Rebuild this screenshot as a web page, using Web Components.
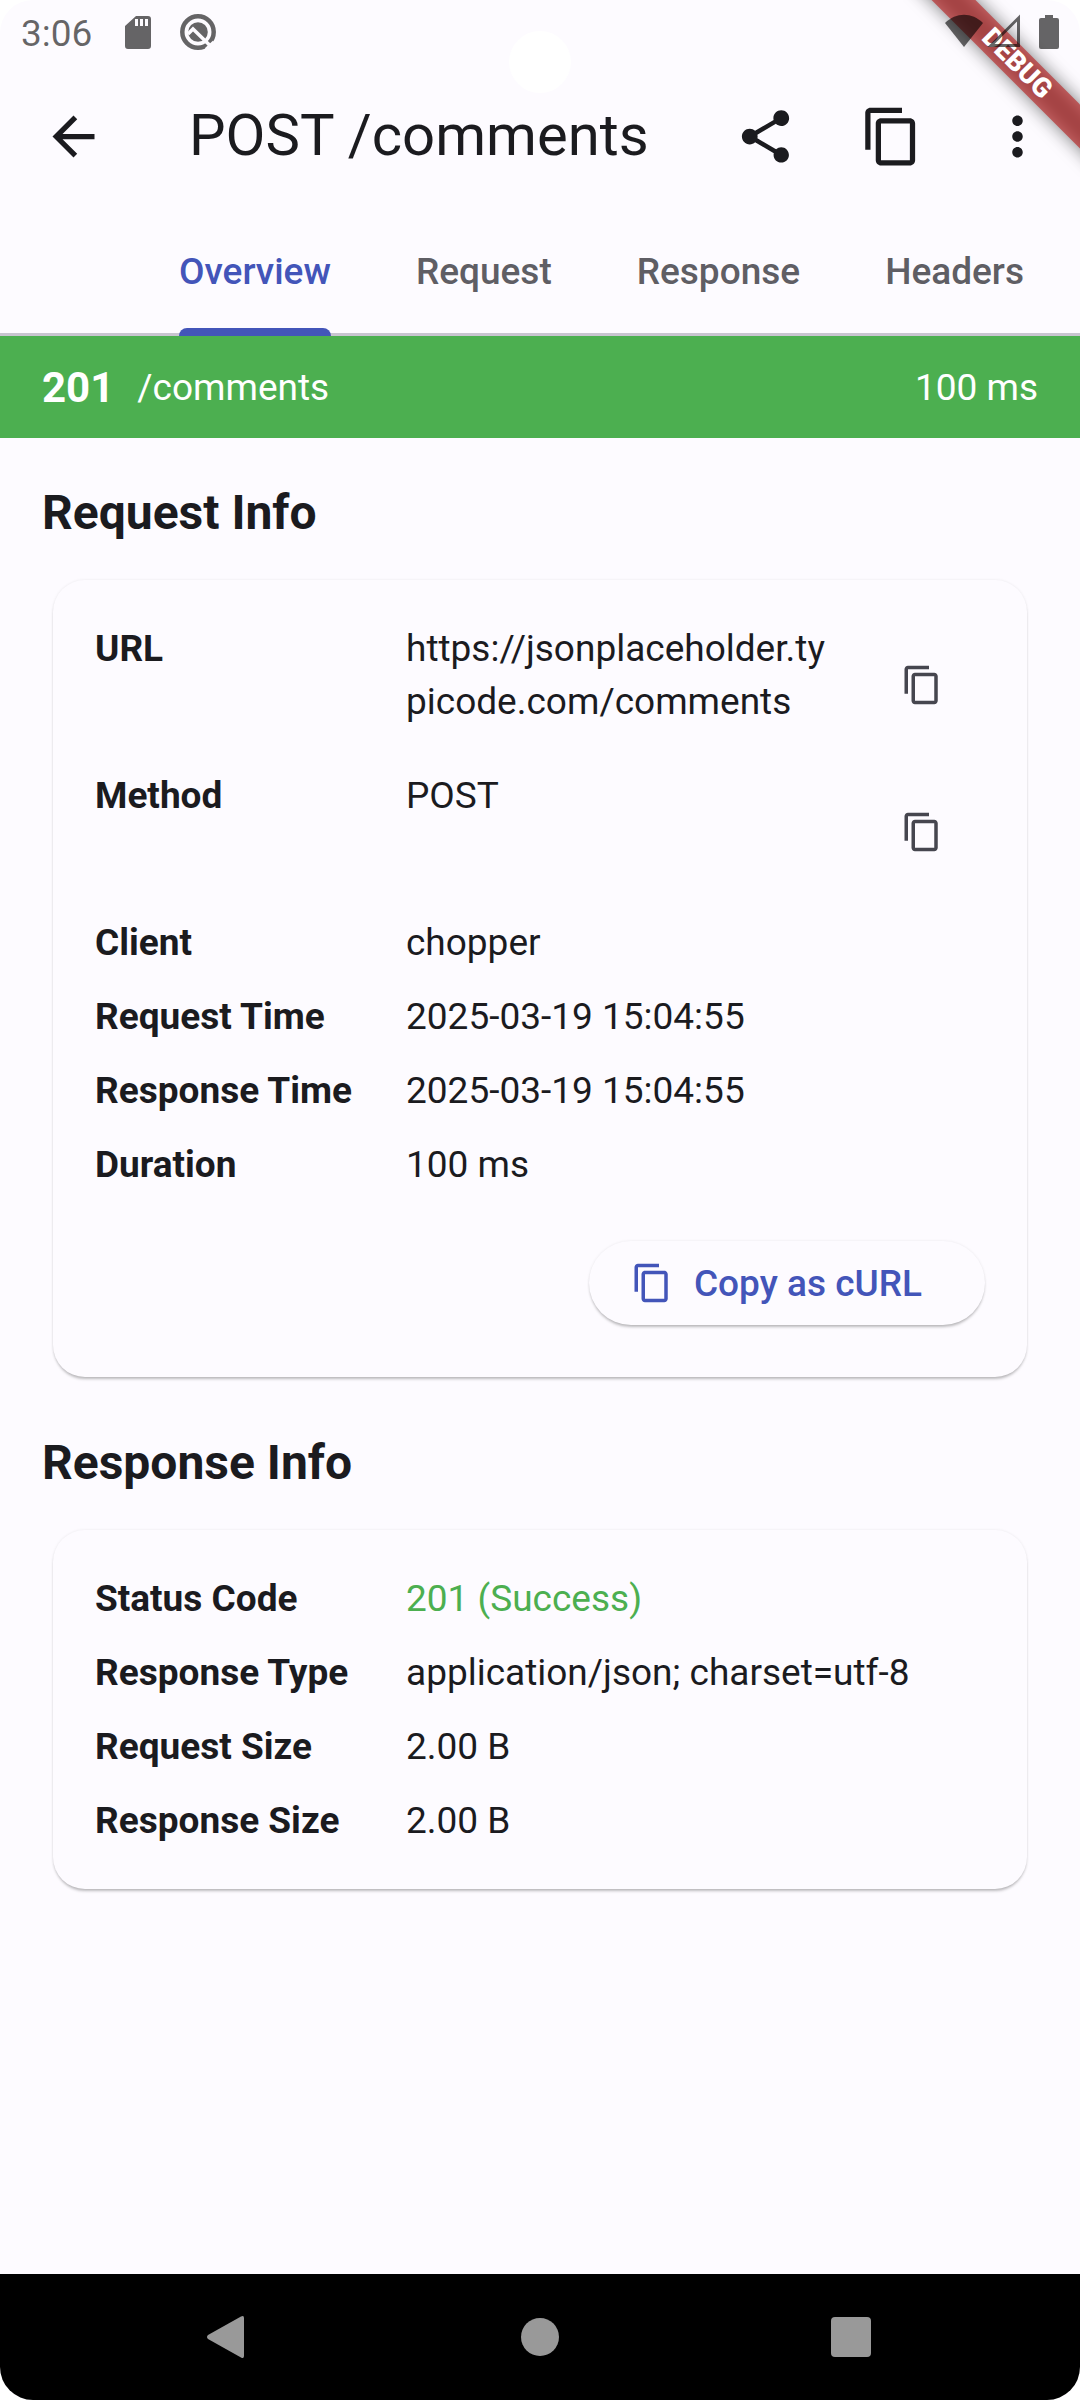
<!DOCTYPE html>
<html lang="en">
<head>
<meta charset="utf-8">
<meta name="viewport" content="width=device-width, initial-scale=1">
<title>POST /comments</title>
<style>
  :root {
    --surface: #fdfbff;
    --text: #1b1b1f;
    --muted: #5f5e64;
    --icon: #46464f;
    --primary: #4355b9;
    --success: #4caf50;
    --lift: 0 3px 3px -1px rgba(0, 0, 0, .25), 0 0 3px rgba(0, 0, 0, .08);
  }
  body { margin: 0; background: #fff; color: var(--text); font: 37px/53px Roboto, sans-serif; }
</style>
</head>
<body>
<phone-screen>
  <status-bar slot="status" time="3:06"></status-bar>
  <debug-banner slot="banner">DEBUG</debug-banner>
  <app-bar heading="POST /comments"></app-bar>
  <tab-strip>
    <tab-item selected>Overview</tab-item>
    <tab-item>Request</tab-item>
    <tab-item>Response</tab-item>
    <tab-item>Headers</tab-item>
  </tab-strip>
  <call-summary code="201" duration="100 ms">/comments</call-summary>
  <info-section heading="Request Info">
    <info-row label="URL" copyable>https://jsonplaceholder.typicode.com/comments</info-row>
    <info-row label="Method" copyable>POST</info-row>
    <info-row label="Client">chopper</info-row>
    <info-row label="Request Time">2025-03-19 15:04:55</info-row>
    <info-row label="Response Time">2025-03-19 15:04:55</info-row>
    <info-row label="Duration">100 ms</info-row>
    <pill-button slot="action">Copy as cURL</pill-button>
  </info-section>
  <info-section heading="Response Info">
    <info-row label="Status Code" success>201 (Success)</info-row>
    <info-row label="Response Type">application/json; charset=utf-8</info-row>
    <info-row label="Request Size">2.00 B</info-row>
    <info-row label="Response Size">2.00 B</info-row>
  </info-section>
  <nav-bar slot="nav"></nav-bar>
</phone-screen>

<script>
const ICONS = {
  back: 'M20 11H7.83l5.59-5.59L12 4l-8 8 8 8 1.41-1.41L7.83 13H20v-2z',
  share: 'M18 16.08c-.76 0-1.44.3-1.96.77L8.91 12.7c.05-.23.09-.46.09-.7s-.04-.47-.09-.7l7.05-4.11c.54.5 1.25.81 2.04.81 1.66 0 3-1.34 3-3s-1.34-3-3-3-3 1.34-3 3c0 .24.04.47.09.7L8.04 9.81C7.5 9.31 6.79 9 6 9c-1.66 0-3 1.34-3 3s1.34 3 3 3c.79 0 1.5-.31 2.04-.81l7.12 4.16c-.05.21-.08.43-.08.65 0 1.61 1.31 2.92 2.92 2.92s2.92-1.31 2.92-2.92-1.31-2.92-2.92-2.92z',
  copy: 'M16 1H4c-1.1 0-2 .9-2 2v14h2V3h12V1zm3 4H8c-1.1 0-2 .9-2 2v14c0 1.1.9 2 2 2h11c1.1 0 2-.9 2-2V7c0-1.1-.9-2-2-2zm0 16H8V7h11v14z',
  more: 'M12 8c1.1 0 2-.9 2-2s-.9-2-2-2-2 .9-2 2 .9 2 2 2zm0 2c-1.1 0-2 .9-2 2s.9 2 2 2 2-.9 2-2-.9-2-2-2zm0 6c-1.1 0-2 .9-2 2s.9 2 2 2 2-.9 2-2-.9-2-2-2z'
};
const icon = (name, size) =>
  `<svg width="${size}" height="${size}" viewBox="0 0 24 24" fill="currentColor" aria-hidden="true"><path d="${ICONS[name]}"/></svg>`;

const RESET = `
  *, *::before { box-sizing: border-box; }
  button { margin: 0; padding: 0; border: 0; background: none; color: inherit; font: inherit; cursor: pointer; }
  svg { display: block; flex: none; }
`;

const define = (name, css, html) => customElements.define(name, class extends HTMLElement {
  connectedCallback() {
    if (this.shadowRoot) return;
    this.attachShadow({ mode: 'open' }).innerHTML =
      `<style>${RESET}${css}</style>${typeof html === 'function' ? html(this) : html}`;
  }
});

define('phone-screen', `
  :host { display: flex; flex-direction: column; position: relative; min-height: 100vh; overflow: hidden;
          border-radius: 33px; background: var(--surface); box-sizing: border-box; }
  main { flex: 1; }
  .camera { position: absolute; top: 31px; left: 50%; margin-left: -31px; width: 62px; height: 62px;
            border-radius: 50%; background: #fff; }
  slot[name=banner] { display: block; position: absolute; top: 0; right: 0; }
  slot[name=status] { display: block; position: relative; z-index: 2; }
`, `
  <div class="camera"></div>
  <slot name="status"></slot>
  <main><slot></slot></main>
  <slot name="banner"></slot>
  <slot name="nav"></slot>
`);

define('status-bar', `
  :host { display: flex; justify-content: space-between; height: 63px; padding: 0 21px; box-sizing: border-box;
          color: rgba(0, 0, 0, .6); }
  div { display: flex; align-items: center; }
  .left { gap: 28px; }
  .time { padding-top: 3px; }
  .right { gap: 4px; }
  .battery { margin-left: 15px; }
`, el => `
  <div class="left">
    <span class="time">${el.getAttribute('time')}</span>
    <svg width="32" height="36" viewBox="0 0 32 36" fill="currentColor" role="img" aria-label="SD card">
      <path fill-rule="evenodd" d="M16 2h12a3 3 0 0 1 3 3v27a3 3 0 0 1-3 3H8a3 3 0 0 1-3-3V12zM15 5v7h3V5zM20 5v7h3V5zM25 5v7h3V5z"/>
    </svg>
    <svg width="36" height="36" viewBox="-18 -18 36 36" role="img" aria-label="System update">
      <mask id="cut">
        <rect x="-18" y="-18" width="36" height="36" fill="#fff"/>
        <path d="M-10 2L-5-3L12.500 14" fill="none" stroke="#000" stroke-width="3.500"/>
        <path d="M7.500 17L15.500 9.500" fill="none" stroke="#000" stroke-width="2"/>
      </mask>
      <g mask="url(#cut)">
        <circle r="15.700" fill="none" stroke="currentColor" stroke-width="4.500"/>
        <circle r="9.800" fill="currentColor"/>
      </g>
    </svg>
  </div>
  <div class="right">
    <svg width="38" height="36" viewBox="0 0 38 36" fill="currentColor" role="img" aria-label="Wi-Fi">
      <path d="M0 9C11-2 27-2 38 9L19 33z"/>
    </svg>
    <svg width="33" height="36" viewBox="0 0 33 36" fill="none" stroke="currentColor" stroke-width="3" role="img" aria-label="Signal">
      <path d="M4 31.500L31.500 4V31.500z"/>
    </svg>
    <svg class="battery" width="20" height="36" viewBox="0 0 20 36" fill="currentColor" role="img" aria-label="Battery">
      <path d="M6 1h8v3h4a2 2 0 0 1 2 2v27a2 2 0 0 1-2 2H2a2 2 0 0 1-2-2V6a2 2 0 0 1 2-2h4z"/>
    </svg>
  </div>
`);

define('debug-banner', `
  :host { display: flex; align-items: center; justify-content: center; width: 126px; height: 126px; pointer-events: none; }
  div { position: relative; flex: none; width: 280px; height: 31px; rotate: 45deg;
        font-size: 27px; line-height: 31px; font-weight: 900; text-align: center; color: #fff; }
  div::before { content: ""; position: absolute; inset: 0; background: rgba(0, 0, 0, .5); filter: blur(9px); }
  span { display: block; position: relative; background: rgba(183, 28, 28, .627); }
`, `<div><span><slot></slot></span></div>`);

define('app-bar', `
  :host { display: flex; align-items: center; height: 147px; }
  button { display: flex; align-items: center; justify-content: center; width: 126px; height: 126px; }
  .back { width: 147px; }
  h1 { flex: 1; margin: 0; padding: 0 0 4px 42px; font-size: 58px; line-height: 74px; font-weight: 400; white-space: nowrap; }
`, el => `
  <button class="back" aria-label="Back">${icon('back', 63)}</button>
  <h1>${el.getAttribute('heading')}</h1>
  <button aria-label="Share">${icon('share', 63)}</button>
  <button aria-label="Copy">${icon('copy', 63)}</button>
  <button aria-label="More">${icon('more', 63)}</button>
`);

define('tab-strip', `
  :host { display: flex; gap: 85px; height: 126px; padding-left: 179px; box-sizing: border-box;
          box-shadow: inset 0 -3px #c8c5d0; overflow: hidden; }
`, `<slot></slot>`);

define('tab-item', `
  :host { display: flex; color: var(--muted); font-weight: 500; }
  :host([selected]) { color: var(--primary); }
  button { display: flex; flex-direction: column; align-items: stretch; justify-content: space-between; }
  span { padding-top: 6px; line-height: 112px; }
  i { height: 8px; border-radius: 8px 8px 0 0; }
  :host([selected]) i { background: var(--primary); }
`, el => `<button role="tab" aria-selected="${el.hasAttribute('selected')}"><span><slot></slot></span><i></i></button>`);

define('call-summary', `
  :host { display: flex; align-items: center; gap: 23px; height: 102px; padding: 0 42px; box-sizing: border-box;
          background: var(--success); color: #fff; }
  b { font-size: 42px; }
  .path { flex: 1; }
`, el => `<b>${el.getAttribute('code')}</b><span class="path"><slot></slot></span><span>${el.getAttribute('duration')}</span>`);

define('info-section', `
  :host { display: block; padding: 42px 42px 11px; }
  h2 { margin: 0 0 34px; font-size: 48px; line-height: 66px; font-weight: 700; }
  .card { display: flex; flex-direction: column; gap: 21px; margin: 0 11px; padding: 42px; border-radius: 32px;
          background: var(--surface); box-shadow: var(--lift); }
`, el => `
  <h2>${el.getAttribute('heading')}</h2>
  <div class="card"><slot></slot><slot name="action"></slot></div>
`);

define('info-row', `
  :host { display: block; }
  dl { display: flex; margin: 0; }
  dt { flex: none; width: 311px; font-weight: 700; }
  dd { flex: 1; min-width: 0; margin: 0; overflow-wrap: anywhere; }
  :host([copyable]) dd { padding-right: 16px; }
  :host([success]) dd { color: var(--success); }
  button { display: flex; align-items: center; justify-content: center; width: 126px; height: 126px; color: var(--icon); }
`, el => `
  <dl><dt>${el.getAttribute('label')}</dt><dd><slot></slot></dd>
  ${el.hasAttribute('copyable') ? `<button aria-label="Copy ${el.getAttribute('label')}">${icon('copy', 42)}</button>` : ''}</dl>
`);

define('pill-button', `
  :host { display: flex; justify-content: flex-end; padding: 29px 0 10px; }
  button { display: flex; align-items: center; gap: 21px; height: 84px; padding: 0 63px 0 42px; border-radius: 42px;
           background: var(--surface); color: var(--primary); font-weight: 500;
           box-shadow: var(--lift); }
`, `<button>${icon('copy', 42)}<span><slot></slot></span></button>`);

define('nav-bar', `
  :host { display: flex; height: 126px; padding: 0 73px; box-sizing: border-box; background: #000; color: #999; }
  button { flex: 1; display: flex; align-items: center; justify-content: center; }
`, `
  <button aria-label="Back"><svg width="44" height="44" viewBox="0 0 44 44" fill="currentColor"><path d="M1 20L34 1.500Q37 0 37 3V41Q37 44 34 42.500L1 24Q-1 22 1 20z"/></svg></button>
  <button aria-label="Home"><svg width="40" height="40" viewBox="0 0 40 40" fill="currentColor"><circle cx="20" cy="20" r="19"/></svg></button>
  <button aria-label="Recent apps"><svg width="40" height="40" viewBox="0 0 40 40" fill="currentColor"><rect width="40" height="40" rx="4"/></svg></button>
`);
</script>
</body>
</html>
